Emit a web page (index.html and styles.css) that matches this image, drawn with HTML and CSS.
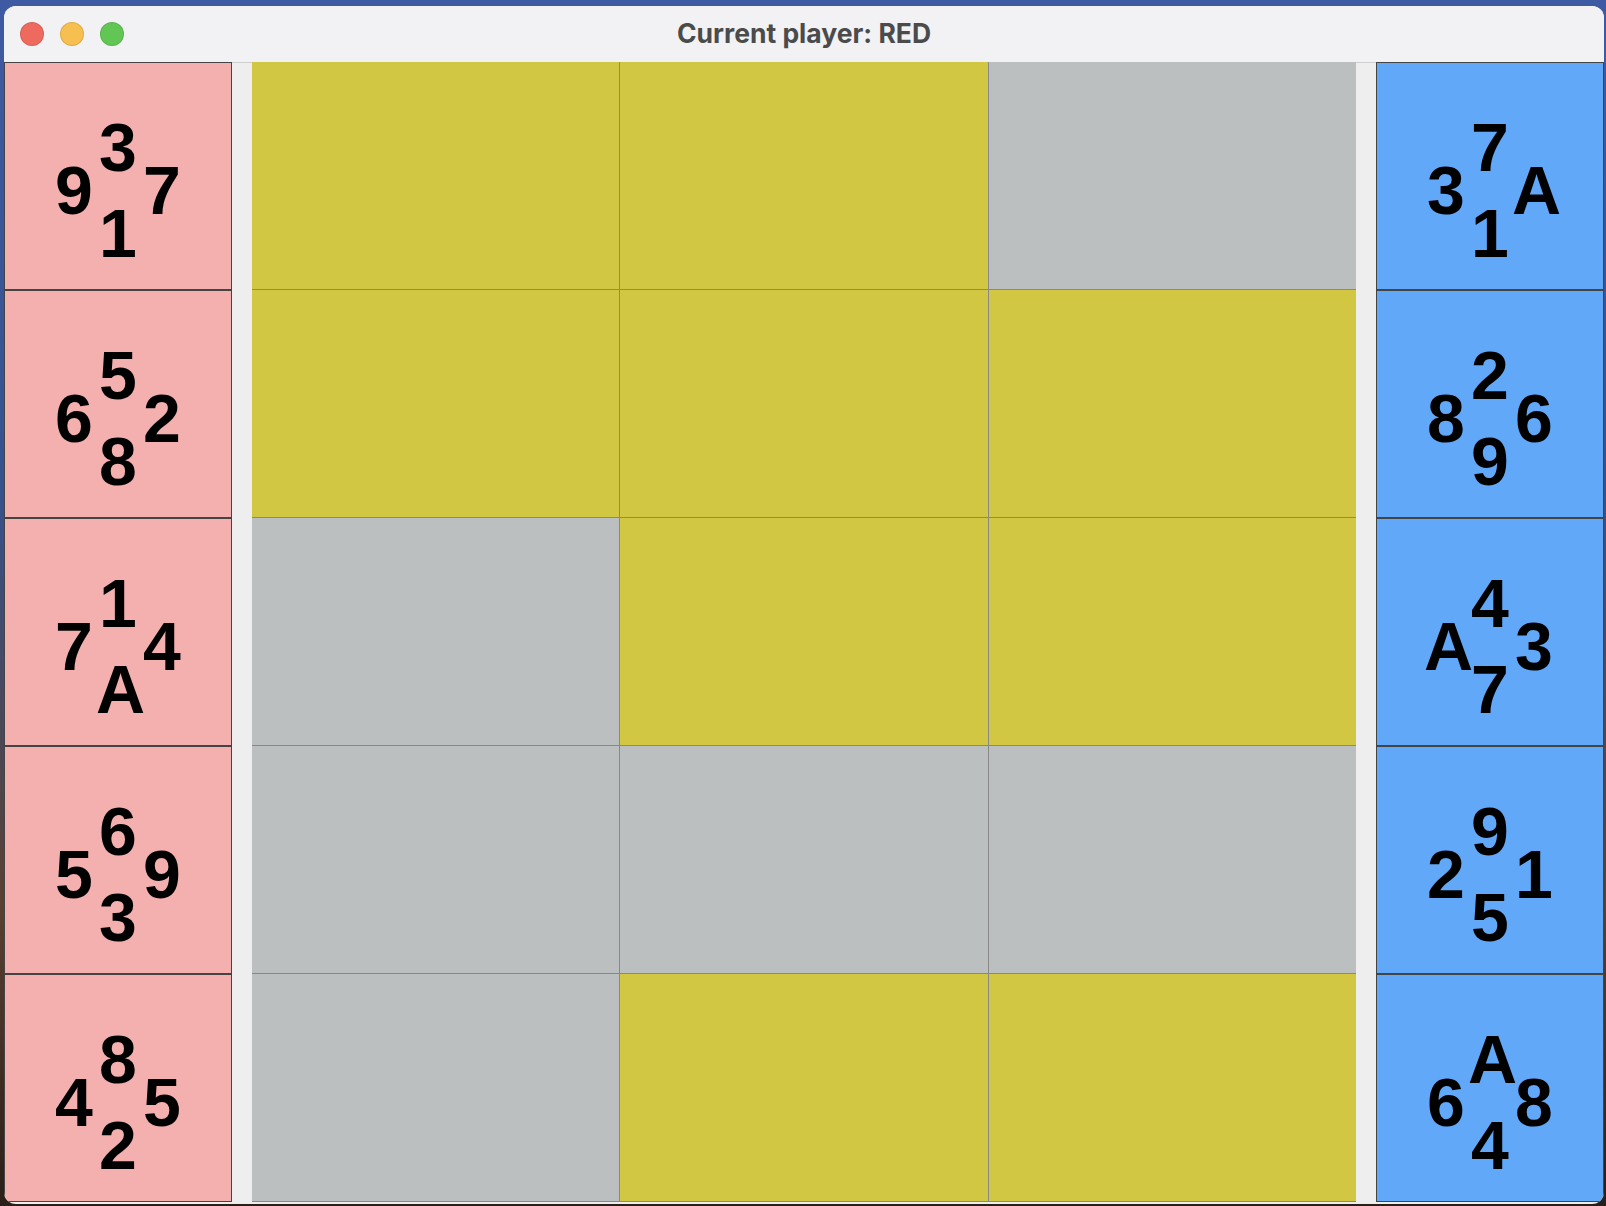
FILE: index.html
```html
<!DOCTYPE html>
<html lang="en">
<head>
    <meta charset="UTF-8">
    <title>Current player: RED</title>
    <link rel="stylesheet" href="styles.css">
</head>
<body>
    <div class="window">
        <div class="titlebar">
            <div class="lights">
                <span class="light red"></span>
                <span class="light yellow"></span>
                <span class="light green"></span>
            </div>
            <div class="title">Current player: RED</div>
            <div></div>
        </div>
        <div class="content">
            <div class="hand">
                <div class="card red-card"><div class="face"><span class="n">3</span><span class="w">9</span><span class="e">7</span><span class="s">1</span></div></div>
                <div class="card red-card"><div class="face"><span class="n">5</span><span class="w">6</span><span class="e">2</span><span class="s">8</span></div></div>
                <div class="card red-card"><div class="face"><span class="n">1</span><span class="w">7</span><span class="e">4</span><span class="s">A</span></div></div>
                <div class="card red-card"><div class="face"><span class="n">6</span><span class="w">5</span><span class="e">9</span><span class="s">3</span></div></div>
                <div class="card red-card"><div class="face"><span class="n">8</span><span class="w">4</span><span class="e">5</span><span class="s">2</span></div></div>
            </div>
            <div class="spacer"></div>
            <div class="board">
                <div class="cell open"></div><div class="cell open"></div><div class="cell"></div>
                <div class="cell open"></div><div class="cell open"></div><div class="cell open"></div>
                <div class="cell"></div><div class="cell open"></div><div class="cell open"></div>
                <div class="cell"></div><div class="cell"></div><div class="cell"></div>
                <div class="cell"></div><div class="cell open"></div><div class="cell open"></div>
            </div>
            <div class="spacer"></div>
            <div class="hand">
                <div class="card blue-card"><div class="face"><span class="n">7</span><span class="w">3</span><span class="e">A</span><span class="s">1</span></div></div>
                <div class="card blue-card"><div class="face"><span class="n">2</span><span class="w">8</span><span class="e">6</span><span class="s">9</span></div></div>
                <div class="card blue-card"><div class="face"><span class="n">4</span><span class="w">A</span><span class="e">3</span><span class="s">7</span></div></div>
                <div class="card blue-card"><div class="face"><span class="n">9</span><span class="w">2</span><span class="e">1</span><span class="s">5</span></div></div>
                <div class="card blue-card"><div class="face"><span class="n">A</span><span class="w">6</span><span class="e">8</span><span class="s">4</span></div></div>
            </div>
        </div>
    </div>
</body>
</html>
```

FILE: styles.css
```css
html, body {
    margin: 0;
    padding: 0;
}
body {
    width: 1606px;
    height: 1206px;
    overflow: hidden;
    background: linear-gradient(to bottom, #3e5aa3 0%, #35528f 40%, #5a4030 75%, #2a1e18 100%);
}
.window {
    margin: 6px 0 0 4px;
    width: 1600px;
    height: 1198px;
    border-radius: 12px;
    overflow: hidden;
    background-color: #eeeeee;
}
.titlebar {
    height: 56px;
    background-color: #f2f2f4;
    display: grid;
    grid-template-columns: 1fr auto 1fr;
    align-items: center;
}
.lights {
    display: flex;
    gap: 16px;
    padding-left: 16px;
}
.light {
    box-sizing: border-box;
    width: 24px;
    height: 24px;
    border-radius: 50%;
    border: 1px solid rgba(0, 0, 0, 0.1);
}
.red { background-color: #ee6a5f; }
.yellow { background-color: #f6bf4f; }
.green { background-color: #62c655; }
.title {
    font-family: Inter, "Liberation Sans", sans-serif;
    font-weight: 700;
    font-size: 26.5px;
    color: #4b4b4b;
    padding-bottom: 2px;
}
.content {
    display: flex;
    height: 1142px;
}
.hand {
    width: 228px;
    display: flex;
    flex-direction: column;
}
.spacer {
    width: 20px;
    border-top: 1px solid #cfcfcf;
}
.card {
    box-sizing: border-box;
    height: 228px;
    border: 1px solid #444444;
    display: flex;
    justify-content: center;
    align-items: center;
    padding-top: 28px;
}
.red-card { background-color: #f3b0af; }
.blue-card { background-color: #62a8f8; }
.face {
    display: grid;
    grid-template-columns: 44px 44px 44px;
    grid-template-rows: 43px 43px 43px;
    font-family: "Liberation Sans", Arial, sans-serif;
    font-weight: 700;
    font-size: 68px;
    line-height: 43px;
    text-align: center;
    color: #000000;
}
.face .n { grid-column: 2; grid-row: 1; }
.face .w { grid-column: 1; grid-row: 2; }
.face .e { grid-column: 3; grid-row: 2; }
.face .s { grid-column: 2; grid-row: 3; }
.board {
    width: 1104px;
    height: 1140px;
    display: grid;
    grid-template-columns: repeat(3, 1fr);
    grid-template-rows: repeat(5, 227px);
    gap: 1px;
    background-color: #888888;
    border-bottom: 1px solid #888888;
    box-sizing: border-box;
}
.cell {
    background-color: #bbbfc0;
}
.cell.open {
    background-color: #d2c742;
}
```
